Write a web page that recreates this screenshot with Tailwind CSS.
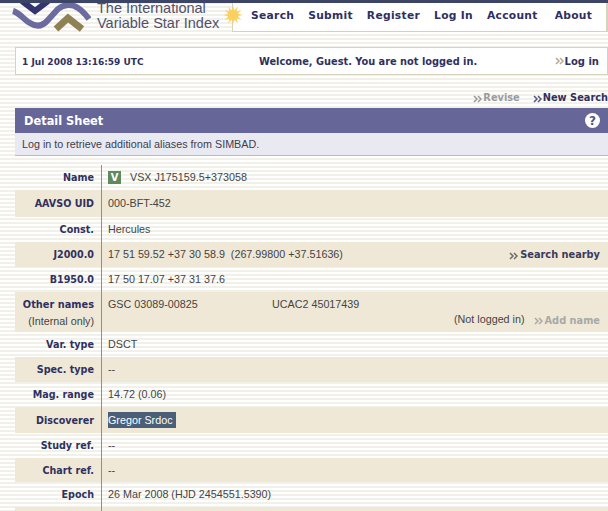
<!doctype html>
<html>
  <head>
    <meta charset="UTF-8" />
    <title>Detail Sheet</title>
    <script src="https://cdn.jsdelivr.net/npm/@tailwindcss/browser@4"></script>
  </head>
  <body class="bg-white">
    <div class="h-[511px] w-[608px] overflow-hidden font-['Liberation_Sans',sans-serif] text-[10.75px] text-[#444] bg-[repeating-linear-gradient(to_bottom,#ffffff_0,#ffffff_2px,#f1f1ea_2px,#f1f1ea_4px)]">
      <div class="relative z-10 h-[3px] bg-[#3d4566]"></div>

      <!-- logo and nav -->
      <header class="flex h-[29px] items-start">
        <svg class="ml-[12px] h-[29px] w-[80px] shrink-0" viewBox="0 0 80 29">
          <path d="M10 -2 L23 8 L36 -2" fill="none" stroke="#34346e" stroke-width="6" />
          <path d="M1 8 C8 10 12 17 18 20 C24 24 30 24 36 17 L46 6 C52 1 60 1 66 5 C71 8 74 12 77 16" fill="none" stroke="#6b6ba0" stroke-width="6" />
          <path d="M44 26 L56 15 L70 26" fill="none" stroke="#8f8154" stroke-width="7" />
        </svg>
        <div class="ml-[5px] w-[125px] shrink-0 -mt-[2px] text-[14.5px] leading-[15px] text-[#50506c]">
          <div>The International</div>
          <div>Variable Star Index</div>
        </div>
        <svg class="relative z-10 ml-[1px] mt-[2px] h-[20px] w-[20px] shrink-0" viewBox="0 0 20 20">
          <polygon points="10,0 11.16,5.65 15,1.34 13.18,6.82 18.66,5 14.35,8.84 20,10 14.35,11.16 18.66,15 13.18,13.18 15,18.66 11.16,14.35 10,20 8.84,14.35 5,18.66 6.82,13.18 1.34,15 5.65,11.16 0,10 5.65,8.84 1.34,5 6.82,6.82 5,1.34 8.84,5.65" fill="#fbd05e" />
          <circle cx="10" cy="10" r="5.5" fill="#fbd05e" />
        </svg>
        <nav class="ml-[-11px] flex h-[29px] flex-1 items-center gap-[14px] border-r-2 border-b border-l border-[#d8d2bd] bg-white pb-[2px] pl-[18px] font-['DejaVu_Sans',sans-serif] text-[10.7px] font-bold tracking-[0.3px] text-[#2f3060]">
          <a>Search</a>
          <a>Submit</a>
          <a>Register</a>
          <a>Log In</a>
          <a>Account</a>
          <a class="ml-[3px]">About</a>
        </nav>
      </header>

      <!-- welcome bar -->
      <div class="mt-[15px] ml-[15px] flex h-[28px] items-center border border-[#d8d2bd] bg-white pr-[8px] pl-[6px] font-['DejaVu_Sans',sans-serif] text-[9px] font-bold text-[#2f3060]">
        <span class="w-[237px] shrink-0 pt-[3px]">1 Jul 2008 13:16:59 UTC</span>
        <span class="pt-[2px] text-[9.8px]">Welcome, Guest. You are not logged in.</span>
        <span class="ml-auto flex items-center text-[10px]">
          <svg class="mr-[1px] h-[8px] w-[9px] text-[#b5ab8c]" viewBox="0 0 9 8"><path d="M1 1 L4 4 L1 7 M5 1 L8 4 L5 7" fill="none" stroke="currentColor" stroke-width="1.5" /></svg>
          Log in
        </span>
      </div>

      <!-- action links -->
      <div class="mt-[11px] flex h-[23px] items-center justify-end gap-[13px] pt-[2px] font-['DejaVu_Sans',sans-serif] text-[9.8px] font-bold">
        <span class="flex items-center text-[#9a9a9f]">
          <svg class="mr-[1px] h-[8px] w-[9px]" viewBox="0 0 9 8"><path d="M1 1 L4 4 L1 7 M5 1 L8 4 L5 7" fill="none" stroke="currentColor" stroke-width="1.5" /></svg>
          Revise
        </span>
        <span class="flex items-center text-[#2f3060]">
          <svg class="mr-[1px] h-[8px] w-[9px] text-[#55557a]" viewBox="0 0 9 8"><path d="M1 1 L4 4 L1 7 M5 1 L8 4 L5 7" fill="none" stroke="currentColor" stroke-width="1.5" /></svg>
          New Search
        </span>
      </div>

      <!-- detail sheet head -->
      <div class="ml-[15px] -mt-[1px]">
        <div class="flex h-[25px] items-center justify-between bg-[#666699] pr-[8px] pl-[9px] font-['DejaVu_Sans',sans-serif] text-[11.4px] font-bold text-white">
          <span class="pt-[2px]">Detail Sheet</span>
          <span class="flex h-[15px] w-[15px] items-center justify-center rounded-full bg-white text-[12px] text-[#55557f]">?</span>
        </div>
        <div class="flex h-[23px] items-center border-b border-[#b9b9c4] bg-[#e9e9f2] pl-[7px] text-[#3d3d50]">Log in to retrieve additional aliases from SIMBAD.</div>
      </div>

      <!-- rows -->
      <div class="mt-[9px] ml-[15px] [&>div]:grid [&>div]:grid-cols-[86px_1fr]">
        <div class="h-[25px]">
          <div class="flex items-center justify-end pt-[2px] pr-[7px] font-['DejaVu_Sans',sans-serif] text-[9.6px] font-bold text-[#2f3060]">Name</div>
          <div class="flex items-center border-l border-[#8f8f8f] pl-[6px]"><span class="mr-[9px] flex h-[13px] w-[13px] items-center justify-center bg-[#5f8a5c] font-['DejaVu_Sans',sans-serif] text-[10px] font-bold text-white">V</span>VSX J175159.5+373058</div>
        </div>
        <div class="h-[27px] bg-[#efe8d6]">
          <div class="flex items-center justify-end pt-[2px] pr-[7px] font-['DejaVu_Sans',sans-serif] text-[9.6px] font-bold text-[#2f3060]">AAVSO UID</div>
          <div class="flex items-center border-l border-[#8f8f8f] pl-[6px]">000-BFT-452</div>
        </div>
        <div class="h-[25px]">
          <div class="flex items-center justify-end pt-[2px] pr-[7px] font-['DejaVu_Sans',sans-serif] text-[9.6px] font-bold text-[#2f3060]">Const.</div>
          <div class="flex items-center border-l border-[#8f8f8f] pl-[6px]">Hercules</div>
        </div>
        <div class="h-[25px] bg-[#efe8d6]">
          <div class="flex items-center justify-end pt-[2px] pr-[7px] font-['DejaVu_Sans',sans-serif] text-[9.6px] font-bold text-[#2f3060]">J2000.0</div>
          <div class="flex items-center justify-between border-l border-[#8f8f8f] pr-[8px] pl-[6px]">
            <span class="whitespace-pre">17 51 59.52 +37 30 58.9  (267.99800 +37.51636)</span>
            <span class="flex items-center pt-[2px] font-['DejaVu_Sans',sans-serif] text-[9.8px] font-bold text-[#3a3a5c]">
              <svg class="mr-[2px] h-[8px] w-[9px] text-[#6b6b6b]" viewBox="0 0 9 8"><path d="M1 1 L4 4 L1 7 M5 1 L8 4 L5 7" fill="none" stroke="currentColor" stroke-width="1.5" /></svg>
              Search nearby
            </span>
          </div>
        </div>
        <div class="h-[25px]">
          <div class="flex items-center justify-end pt-[2px] pr-[7px] font-['DejaVu_Sans',sans-serif] text-[9.6px] font-bold text-[#2f3060]">B1950.0</div>
          <div class="flex items-center border-l border-[#8f8f8f] pl-[6px]">17 50 17.07 +37 31 37.6</div>
        </div>
        <div class="h-[40px] bg-[#efe8d6]">
          <div class="pt-[5px] pr-[7px] text-right leading-[16px]">
            <div class="font-['DejaVu_Sans',sans-serif] text-[9.8px] font-bold text-[#2f3060]">Other names</div>
            <div>(Internal only)</div>
          </div>
          <div class="border-l border-[#8f8f8f] pr-[8px] pl-[6px]">
            <div class="flex pt-[5px] leading-[14px]"><span class="w-[164px]">GSC 03089-00825</span><span>UCAC2 45017439</span></div>
            <div class="flex justify-end gap-[9px] leading-[16px]">
              <span>(Not logged in)</span>
              <span class="flex items-center pt-[2px] font-['DejaVu_Sans',sans-serif] text-[9.8px] font-bold text-[#a8a8a8]">
                <svg class="mr-[2px] h-[8px] w-[9px]" viewBox="0 0 9 8"><path d="M1 1 L4 4 L1 7 M5 1 L8 4 L5 7" fill="none" stroke="currentColor" stroke-width="1.5" /></svg>
                Add name
              </span>
            </div>
          </div>
        </div>
        <div class="h-[25px]">
          <div class="flex items-center justify-end pt-[2px] pr-[7px] font-['DejaVu_Sans',sans-serif] text-[9.6px] font-bold text-[#2f3060]">Var. type</div>
          <div class="flex items-center border-l border-[#8f8f8f] pl-[6px]">DSCT</div>
        </div>
        <div class="h-[25px] bg-[#efe8d6]">
          <div class="flex items-center justify-end pt-[2px] pr-[7px] font-['DejaVu_Sans',sans-serif] text-[9.6px] font-bold text-[#2f3060]">Spec. type</div>
          <div class="flex items-center border-l border-[#8f8f8f] pl-[6px]">--</div>
        </div>
        <div class="h-[25px]">
          <div class="flex items-center justify-end pt-[2px] pr-[7px] font-['DejaVu_Sans',sans-serif] text-[9.6px] font-bold text-[#2f3060]">Mag. range</div>
          <div class="flex items-center border-l border-[#8f8f8f] pl-[6px]">14.72 (0.06)</div>
        </div>
        <div class="h-[26px] bg-[#efe8d6]">
          <div class="flex items-center justify-end pt-[2px] pr-[7px] font-['DejaVu_Sans',sans-serif] text-[9.6px] font-bold text-[#2f3060]">Discoverer</div>
          <div class="flex items-center border-l border-[#8f8f8f] pl-[6px]"><span class="bg-[#4a6078] pr-[3px] text-white">Gregor Srdoc</span></div>
        </div>
        <div class="h-[25px]">
          <div class="flex items-center justify-end pt-[2px] pr-[7px] font-['DejaVu_Sans',sans-serif] text-[9.6px] font-bold text-[#2f3060]">Study ref.</div>
          <div class="flex items-center border-l border-[#8f8f8f] pl-[6px]">--</div>
        </div>
        <div class="h-[24px] bg-[#efe8d6]">
          <div class="flex items-center justify-end pt-[2px] pr-[7px] font-['DejaVu_Sans',sans-serif] text-[9.6px] font-bold text-[#2f3060]">Chart ref.</div>
          <div class="flex items-center border-l border-[#8f8f8f] pl-[6px]">--</div>
        </div>
        <div class="h-[25px]">
          <div class="flex items-center justify-end pt-[2px] pr-[7px] font-['DejaVu_Sans',sans-serif] text-[9.6px] font-bold text-[#2f3060]">Epoch</div>
          <div class="flex items-center border-l border-[#8f8f8f] pl-[6px]">26 Mar 2008 (HJD 2454551.5390)</div>
        </div>
        <div class="h-[25px] bg-[#efe8d6]">
          <div></div>
          <div class="border-l border-[#8f8f8f]"></div>
        </div>
      </div>
    </div>
  </body>
</html>
